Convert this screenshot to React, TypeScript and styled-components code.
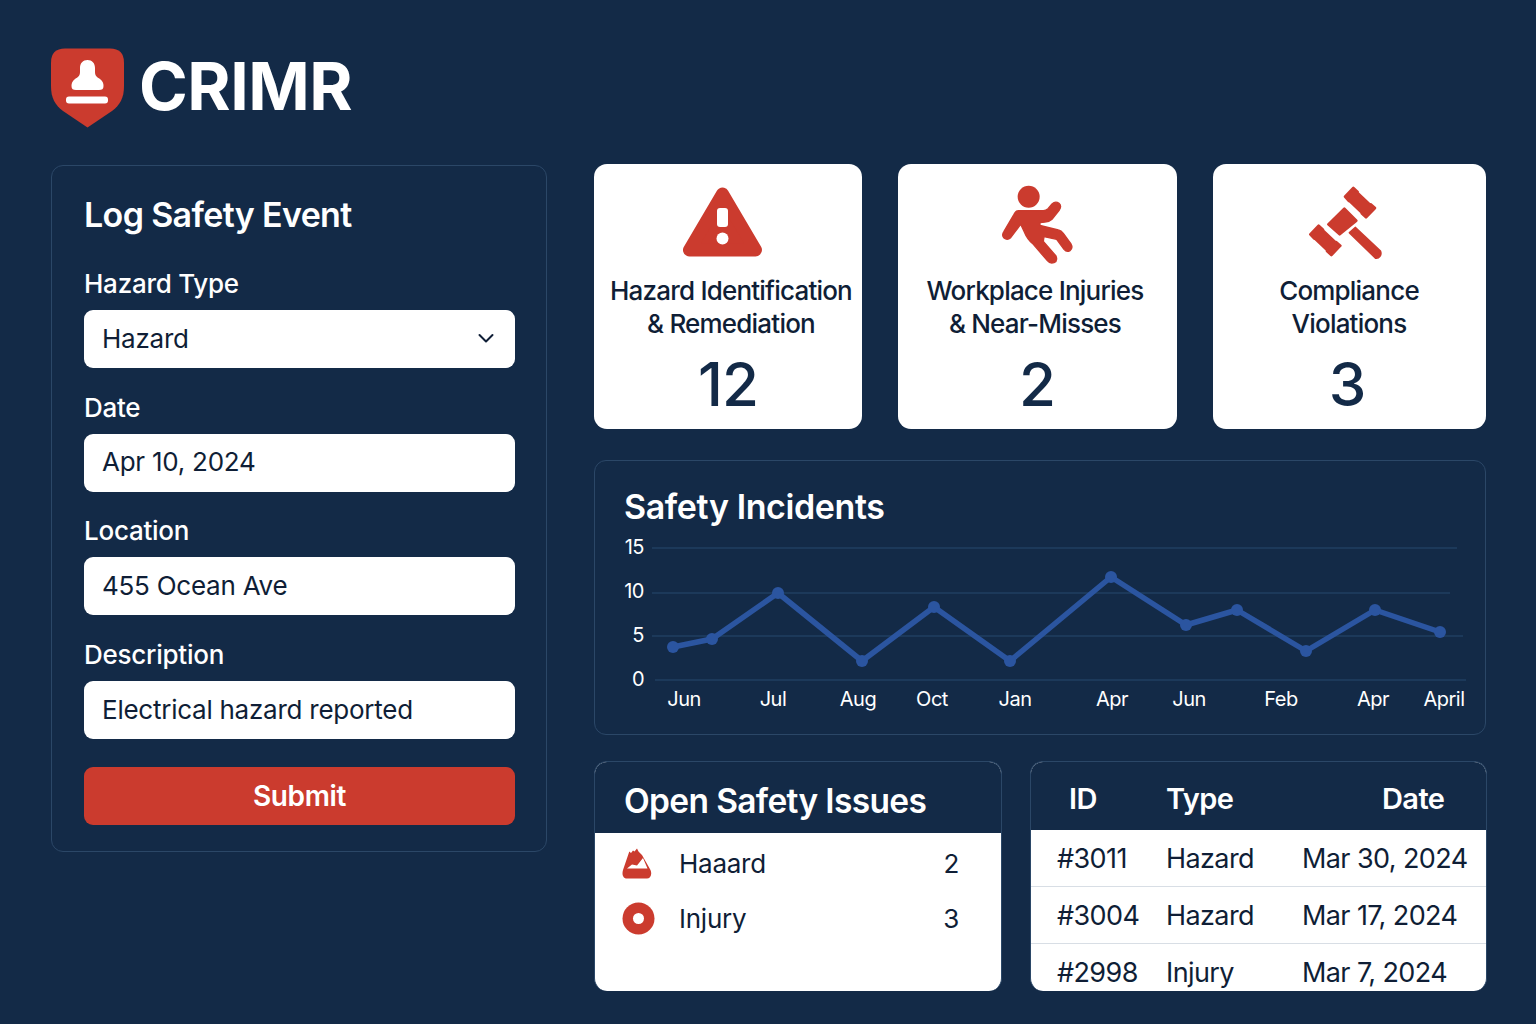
import React from "react";
import styled, { createGlobalStyle } from "styled-components";

const Global = createGlobalStyle`
  html, body { margin: 0; padding: 0; background: #132a47; }
  body { font-family: Inter, "Noto Sans", "Liberation Sans", sans-serif; }
  * { box-sizing: border-box; }
`;

const RED = "#cb3b2e";
const INK = "#0f1e36";
const NAVY = "#132a47";

const Page = styled.div`
  width: 1536px;
  height: 1024px;
  padding: 48px 50px 0 51px;
  background: ${NAVY};
  overflow: hidden;
`;
const Brand = styled.header`
  display: flex;
  align-items: center;
  gap: 15px;
  height: 80px;
  margin-bottom: 36px;
`;
const BrandName = styled.h1`
  margin: -4px 0 0;
  font-size: 66px;
  font-weight: 700;
  letter-spacing: -0.5px;
  color: #fff;
`;
const Columns = styled.div`
  display: grid;
  grid-template-columns: 496px 892px;
  column-gap: 47px;
  align-items: start;
`;
const FormPanel = styled.form`
  display: flex;
  flex-direction: column;
  margin-top: 1px;
  height: 687px;
  padding: 28px 31px 0 32px;
  border: 1px solid #2b4767;
  border-radius: 12px;
`;
const FormTitle = styled.h2`
  margin: 0 0 33px;
  height: 42px;
  line-height: 42px;
  font-size: 34px;
  font-weight: 600;
  letter-spacing: -0.65px;
  color: #fff;
`;
const Field = styled.div`
  display: flex;
  flex-direction: column;
  margin-bottom: 24.7px;
`;
const Label = styled.label`
  height: 30px;
  line-height: 30px;
  margin-bottom: 11px;
  font-size: 26px;
  font-weight: 500;
  letter-spacing: -0.25px;
  color: #fff;
`;
const Control = styled.div`
  display: flex;
  align-items: center;
  justify-content: space-between;
  height: 58px;
  padding: 0 19px 2px 18px;
  border-radius: 9px;
  background: #fff;
  font-size: 26px;
  letter-spacing: -0.25px;
  color: ${INK};
`;
const Submit = styled.button`
  display: block;
  width: 100%;
  height: 58px;
  margin-top: 3px;
  border: 0;
  border-radius: 9px;
  background: ${RED};
  font-family: inherit;
  font-size: 28px;
  font-weight: 600;
  letter-spacing: -0.4px;
  color: #fff;
`;
const RightColumn = styled.div`
  display: flex;
  flex-direction: column;
`;
const StatRow = styled.section`
  display: grid;
  grid-template-columns: 268px 279px 273px;
  column-gap: 36px;
  height: 265px;
  margin-bottom: 31px;
`;
const StatCard = styled.article`
  display: flex;
  flex-direction: column;
  align-items: center;
  padding-top: 20px;
  border-radius: 13px;
  background: #fff;
`;
const IconSlot = styled.div<{ $shift: number }>`
  display: flex;
  align-items: center;
  justify-content: center;
  height: 78px;
  margin-bottom: 12px;
  margin-left: ${(p) => p.$shift}px;
`;
const StatLabel = styled.div<{ $shift: number }>`
  margin-left: ${(p) => p.$shift}px;
  font-size: 26px;
  font-weight: 450;
  line-height: 33px;
  letter-spacing: -0.8px;
  text-align: center;
  white-space: pre-line;
  color: ${INK};
`;
const StatValue = styled.div<{ $shift: number }>`
  margin-top: 8px;
  margin-left: ${(p) => p.$shift}px;
  font-size: 60px;
  line-height: 72px;
  font-weight: 500;
  letter-spacing: -1px;
  color: ${NAVY};
`;
const ChartPanel = styled.section`
  height: 275px;
  margin-bottom: 26px;
  border: 1px solid #2b4767;
  border-radius: 12px;
`;
const ChartTitle = styled.h2`
  margin: 0;
  height: 74px;
  padding: 26px 0 0 29px;
  line-height: 40px;
  font-size: 34px;
  font-weight: 600;
  letter-spacing: -0.4px;
  color: #fff;
`;
const ChartSvg = styled.svg`
  display: block;
  margin-left: -1px;
  overflow: visible;
`;
const AxisText = styled.text`
  font-family: Inter, "Liberation Sans", sans-serif;
  font-size: 20px;
  letter-spacing: -0.5px;
  fill: #fff;
`;
const BottomRow = styled.section`
  display: grid;
  grid-template-columns: 408px 457px;
  column-gap: 28px;
  height: 230px;
`;
const Card = styled.div`
  height: 230px;
  overflow: hidden;
  border: 1px solid #2b4767;
  border-bottom: 0;
  border-radius: 13px;
  background: #fff;
`;
const IssuesHead = styled.h2`
  margin: 0;
  height: 71px;
  padding: 18px 0 0 29px;
  line-height: 42px;
  background: ${NAVY};
  font-size: 33.5px;
  font-weight: 600;
  letter-spacing: -0.65px;
  color: #fff;
`;
const IssueList = styled.ul`
  margin: 0;
  padding: 3px 42px 0 27px;
  list-style: none;
`;
const IssueRow = styled.li`
  display: grid;
  grid-template-columns: 57px 1fr auto;
  align-items: center;
  height: 55px;
  font-size: 26px;
  letter-spacing: -0.25px;
  color: ${INK};
`;
const TableHead = styled.div`
  display: grid;
  grid-template-columns: 109px 136px 1fr;
  height: 68px;
  padding: 16px 0 0 26px;
  line-height: 42px;
  background: ${NAVY};
  font-size: 29px;
  font-weight: 600;
  letter-spacing: -0.6px;
  color: #fff;
`;
const HeadCell = styled.div<{ $inset: number }>`
  padding-left: ${(p) => p.$inset}px;
`;
const TableRow = styled.div`
  display: grid;
  grid-template-columns: 109px 136px 1fr;
  align-items: center;
  height: 57px;
  padding-left: 26px;
  border-bottom: 1px solid #d8dee5;
  font-size: 27px;
  letter-spacing: -0.6px;
  color: ${INK};
  &:last-child { border-bottom: 0; }
`;

const Logo = () => (
  <svg width="73" height="80" viewBox="0 0 73 80" style={{ flex: "none" }}>
    <path fill={RED} d="M14 0.5H59Q73 0.5 73 14.5V38C73 50 69 57 61 63L36.5 79.5L12 63C4 57 0 50 0 38V14.5Q0 0.5 14 0.5Z" />
    <path fill="#fff" d="M36.5 12C41 12 44 15 44 20V24C44 28 46 29 49 31C52 33 52.5 36 52.5 38C52.5 41 51 42 48 42H25C22 42 20.5 41 20.5 38C20.5 36 21 33 24 31C27 29 29 28 29 24V20C29 15 32 12 36.5 12Z" />
    <rect x="15" y="48.5" width="42" height="7" rx="3" fill="#fff" />
  </svg>
);

const WarningIcon = () => (
  <svg width="80" height="72" viewBox="0 0 80 72">
    <path fill={RED} stroke={RED} strokeWidth="13" strokeLinejoin="round" d="M39.5 7L6.5 63H72.5Z" />
    <rect x="34" y="21" width="11" height="19" rx="3" fill="#fff" />
    <circle cx="39.5" cy="51.5" r="6" fill="#fff" />
  </svg>
);

const PersonIcon = () => (
  <svg width="100" height="95" viewBox="0 0 300 285">
    <circle cx="116" cy="62" r="33" fill={RED} />
    <path
      fill={RED}
      stroke={RED}
      strokeWidth="4"
      strokeLinejoin="round"
      d="M85 104L160 104Q168 104 174 98L186 84Q196 74 207 82Q216 90 208 102L186 130Q178 138 165 138L150 140L150 148L205 162Q214 164 220 172L243 204Q250 216 240 224Q230 230 222 220L200 190L162 182L160 196L198 240Q204 254 192 260Q180 264 172 254L130 205Q112 190 104 170L92 145L62 185Q52 194 42 186Q34 178 42 166L72 115Q78 104 85 104Z"
    />
  </svg>
);

const gavelBlock = "M150 62L175 36L188 48L187 50L225 86L227 85L240 96L213 124L200 112L201 110L163 74L162 75Z";

const GavelIcon = () => (
  <svg width="100" height="95" viewBox="0 0 300 285">
    <g fill={RED} stroke={RED} strokeWidth="8" strokeLinejoin="round">
      <path d={gavelBlock} />
      <path d="M100 145L148 98L184 134L134 175Z" />
      <path d={gavelBlock} transform="translate(-104 113)" />
    </g>
    <path fill={RED} stroke={RED} strokeWidth="6" strokeLinejoin="round" d="M164 170L181 155L256 226C260 236 252 248 242 246Z" />
  </svg>
);

const HazardGlyph = () => (
  <svg width="30" height="31" viewBox="0 0 30 31">
    <path fill={RED} d="M7.3 3.5L9 5L11 2.5L12.5 3.5L15 0.5L16.5 3.5L20 7L28.5 22C30.5 27 28 30.5 25 30.5H5C1.5 30.5 -0.5 27 1 22Z" />
    <path fill="#fff" d="M5 20.5L10 16.5L15 17.5L21 10L25.5 20.5Z" />
  </svg>
);

const InjuryGlyph = () => (
  <svg width="33" height="33" viewBox="0 0 33 33">
    <circle cx="16.5" cy="16.5" r="16" fill={RED} />
    <circle cx="16.5" cy="16.5" r="5.5" fill="#fff" />
  </svg>
);

const Chevron = () => (
  <svg width="20" height="20" viewBox="0 0 20 20" fill="none" stroke={INK} strokeWidth="2" strokeLinecap="round" strokeLinejoin="round">
    <path d="M3.5 7L10 13.5L16.5 7" />
  </svg>
);

/* chart coordinates are page pixels minus the chart's origin */
const origin = { x: 594, y: 535 };
const points = [[673,647],[712,639],[778,593],[862,661],[934,607],[1010,661],[1111,577],[1186,625],[1237,610],[1306,651],[1375,610],[1440,632]].map(
  ([x, y]) => [x - origin.x, y - origin.y]
);
const grid = [[548,652,1457],[593,652,1450],[636,652,1463],[680,655,1466]];
const yLabels = [["15",554],["10",598],["5",642],["0",686]] as const;
const xLabels = [["Jun",684],["Jul",773],["Aug",858],["Oct",932],["Jan",1015],["Apr",1112],["Jun",1189],["Feb",1281],["Apr",1373],["April",1444]] as const;

const stats = [
  { icon: <WarningIcon />, iconShift: -10, label: "Hazard Identification\n& Remediation", labelShift: 6, value: "12", valueShift: 0 },
  { icon: <PersonIcon />, iconShift: 5, label: "Workplace Injuries\n& Near-Misses", labelShift: -5, value: "2", valueShift: -1 },
  { icon: <GavelIcon />, iconShift: -9, label: "Compliance\nViolations", labelShift: -1, value: "3", valueShift: -5 },
];

const fields = [
  { label: "Hazard Type", value: "Hazard", select: true },
  { label: "Date", value: "Apr 10, 2024" },
  { label: "Location", value: "455 Ocean Ave" },
  { label: "Description", value: "Electrical hazard reported" },
];

const rows = [
  ["#3011", "Hazard", "Mar 30, 2024"],
  ["#3004", "Hazard", "Mar 17, 2024"],
  ["#2998", "Injury", "Mar 7, 2024"],
];

export default function App() {
  return (
    <Page>
      <Global />
      <Brand>
        <Logo />
        <BrandName>CRIMR</BrandName>
      </Brand>
      <Columns>
        <FormPanel>
          <FormTitle>Log Safety Event</FormTitle>
          {fields.map((f) => (
            <Field key={f.label}>
              <Label>{f.label}</Label>
              <Control>
                {f.value}
                {f.select && <Chevron />}
              </Control>
            </Field>
          ))}
          <Submit type="button">Submit</Submit>
        </FormPanel>
        <RightColumn>
          <StatRow>
            {stats.map((s) => (
              <StatCard key={s.value}>
                <IconSlot $shift={s.iconShift}>{s.icon}</IconSlot>
                <StatLabel $shift={s.labelShift}>{s.label}</StatLabel>
                <StatValue $shift={s.valueShift}>{s.value}</StatValue>
              </StatCard>
            ))}
          </StatRow>
          <ChartPanel>
            <ChartTitle>Safety Incidents</ChartTitle>
            <ChartSvg width="892" height="190" viewBox="0 0 892 190">
              {grid.map(([y, a, b]) => (
                <line key={y} x1={a - origin.x} x2={b - origin.x} y1={y - origin.y} y2={y - origin.y} stroke="#27486f" strokeWidth="1.2" />
              ))}
              {yLabels.map(([t, y]) => (
                <AxisText key={t} x={644 - origin.x} y={y - origin.y} textAnchor="end">{t}</AxisText>
              ))}
              {xLabels.map(([t, x], i) => (
                <AxisText key={i} x={x - origin.x} y={706 - origin.y} textAnchor="middle">{t}</AxisText>
              ))}
              <polyline fill="none" stroke="#2b55a0" strokeWidth="5.5" strokeLinejoin="round" points={points.map((p) => p.join(",")).join(" ")} />
              {points.map(([x, y], i) => (
                <circle key={i} cx={x} cy={y} r="6" fill="#2b55a0" />
              ))}
            </ChartSvg>
          </ChartPanel>
          <BottomRow>
            <Card>
              <IssuesHead>Open Safety Issues</IssuesHead>
              <IssueList>
                <IssueRow><HazardGlyph /><span>Haaard</span><span>2</span></IssueRow>
                <IssueRow><InjuryGlyph /><span>Injury</span><span>3</span></IssueRow>
              </IssueList>
            </Card>
            <Card>
              <TableHead>
                <HeadCell $inset={12}>ID</HeadCell>
                <HeadCell $inset={0}>Type</HeadCell>
                <HeadCell $inset={80}>Date</HeadCell>
              </TableHead>
              {rows.map((r) => (
                <TableRow key={r[0]}>
                  <span>{r[0]}</span>
                  <span>{r[1]}</span>
                  <span>{r[2]}</span>
                </TableRow>
              ))}
            </Card>
          </BottomRow>
        </RightColumn>
      </Columns>
    </Page>
  );
}
